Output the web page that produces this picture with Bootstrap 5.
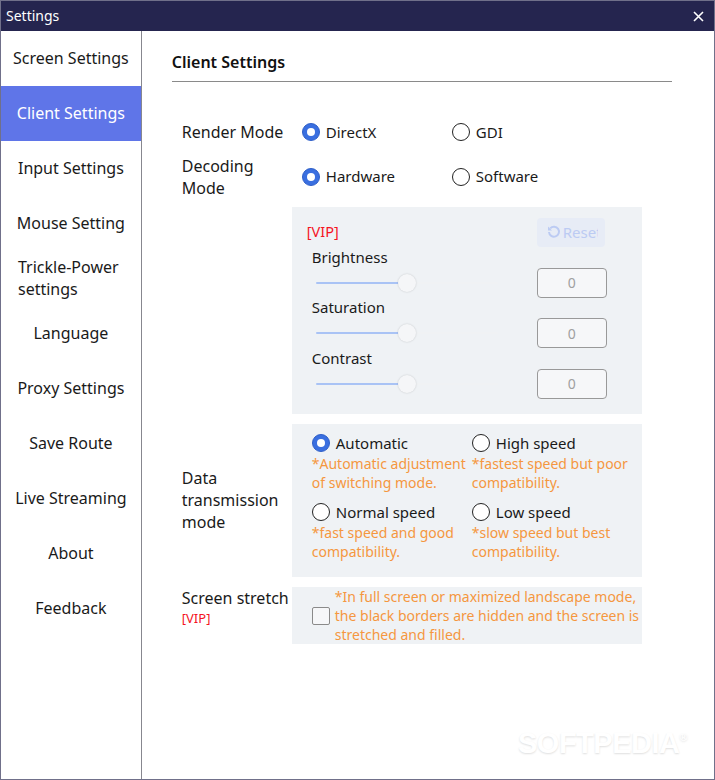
<!DOCTYPE html>
<html lang="en">
<head>
    <meta charset="UTF-8">
    <meta name="viewport" content="width=device-width, initial-scale=1.0">
    <title>Settings</title>
    <link href="https://cdn.jsdelivr.net/npm/bootstrap@5.3.3/dist/css/bootstrap.min.css" rel="stylesheet">
    <style>
        html, body { margin: 0; background: #fff; }
        body { font-family: "Noto Sans", "Noto Sans CJK SC", sans-serif; font-size: 15px; color: #1a1a1a; }
        .app-window { width: 715px; height: 780px; border: 1px solid #70708a; position: relative; overflow: hidden; }
        .title-bar { height: 30px; background: #25254f; color: #fff; font-size: 14px; padding: 0 5px 2px; }
        .close-x { width: 11px; height: 11px; margin: 2px 5px 0 0; }
        .side-menu { width: 141px; border-right: 1px solid #87878f; }
        .side-item { height: 55px; padding: 0 0 1px; color: #1a1a1a; font-size: 16px; text-decoration: none; line-height: 22px; white-space: nowrap; }
        .side-item:hover { color: #1a1a1a; }
        .side-item.current { background: #5f75e8; color: #fff; }
        .side-item.two-line { justify-content: flex-start; text-align: left; padding-left: 17px; }
        .main-pane { padding: 0 42px 0 30px; width: 573px; }
        .pane-title { height: 51px; margin: 0; font-size: 16px; font-weight: 600; line-height: 20px; padding-top: 21px; border-bottom: 1px solid #8a8a8a; color: #111; }
        .field-row { margin-left: 10px; }
        .render-row { margin-top: 39px; }
        .decode-row { margin-top: 11px; }
        .field-label { width: 110px; flex: none; font-size: 16px; line-height: 22px; white-space: nowrap; }
        .vip-tag { color: #f5141e; font-size: 13px; line-height: 18px; }
        .vip-big { font-size: 14.5px; position: relative; top: -1px; }
        .radio-pick { width: 150px; padding-left: 10px; gap: 6px; }
        .radio-pick .form-check-input, .mode-cell .form-check-input { width: 18px; height: 18px; margin: 0; flex: none; border: 1px solid #222; background-color: #fff; }
        .form-check-input:checked { background-color: #3a6fe0 !important; border-color: #2f5fc8 !important; }
        .grey-panel { width: 350px; background: #eff2f5; }
        .tune-panel { height: 207px; padding: 11px 35px 0 15px; margin-top: 8px; }
        .reset-btn { width: 68px; height: 29px; margin-right: 2px; padding: 0 0 0 10px; border: 0; border-radius: 4px; background: #e7ecf6; color: #bccbf3; font-size: 15px; gap: 2px; }
        .reset-word { display: block; width: 35px; overflow: hidden; text-align: left; }
        .tune-row { height: 50.5px; }
        .tune-name { padding-left: 5px; line-height: 20px; }
        .tune-slider { width: 182px; height: 18px; margin: 7px 0 0 9px; display: block; padding: 0; }
        .tune-slider::-webkit-slider-runnable-track { height: 2px; background: linear-gradient(to right, #a9c3f5 50%, #f0f2f4 50%); }
        .tune-slider:disabled::-webkit-slider-thumb { -webkit-appearance: none; appearance: none; width: 18px; height: 18px; margin-top: -8px; border-radius: 50%; background-color: #f5f6f8; box-shadow: 0 0 2px rgba(0,0,0,.18); }
        .tune-value, .tune-value:disabled { width: 70px; height: 30px; margin-top: 21px; padding: 0; border: 1px solid #999; border-radius: 4px; background: #f6f7f9; color: #a0a0a0; font-size: 14px; text-align: center; }
        .mode-label { padding-top: 10px; }
        .mode-panel { height: 153px; margin-top: 10px; padding: 9px 0 0 20px; }
        .mode-grid { display: grid; grid-template-columns: 160px 160px; }
        .mode-cell { height: 69px; }
        .mode-head { gap: 6px; height: 21px; }
        .hint-text { color: #f5973f; font-size: 14px; line-height: 19px; white-space: nowrap; }
        .stretch-label { padding-top: 10px; }
        .stretch-panel { height: 57px; margin-top: 10px; padding: 2px 0 0 20px; gap: 5px; overflow: hidden; }
        .stretch-panel .form-check-input { width: 18px; height: 18px; margin: 0; flex: none; border: 1px solid #8a8a8a; border-radius: 2px; background-color: #f6f7f9; }
        .stretch-panel .hint-text { margin-top: -2px; }
        .soft-mark { position: absolute; left: 517px; top: 721px; color: #fff; font-size: 29px; font-weight: 700; font-family: "Liberation Sans", sans-serif; letter-spacing: -.5px; text-shadow: 0 1px 2px rgba(0,0,0,.13); }
        .soft-mark sup { font-size: 11px; top: -1.1em; }
    </style>
</head>
<body>
    <div class="app-window d-flex flex-column">
        <div class="title-bar d-flex align-items-center justify-content-between">
            <span>Settings</span>
            <svg class="close-x" viewBox="0 0 11 11"><path d="M1 1l9 9M10 1l-9 9" stroke="#fff" stroke-width="1.6" fill="none"/></svg>
        </div>
        <div class="d-flex flex-grow-1">
            <nav class="side-menu d-flex flex-column">
                <a class="side-item d-flex align-items-center justify-content-center" href="#">Screen Settings</a>
                <a class="side-item current d-flex align-items-center justify-content-center" href="#">Client Settings</a>
                <a class="side-item d-flex align-items-center justify-content-center" href="#">Input Settings</a>
                <a class="side-item d-flex align-items-center justify-content-center" href="#">Mouse Setting</a>
                <a class="side-item two-line d-flex align-items-center" href="#">Trickle-Power<br>settings</a>
                <a class="side-item d-flex align-items-center justify-content-center" href="#">Language</a>
                <a class="side-item d-flex align-items-center justify-content-center" href="#">Proxy Settings</a>
                <a class="side-item d-flex align-items-center justify-content-center" href="#">Save Route</a>
                <a class="side-item d-flex align-items-center justify-content-center" href="#">Live Streaming</a>
                <a class="side-item d-flex align-items-center justify-content-center" href="#">About</a>
                <a class="side-item d-flex align-items-center justify-content-center" href="#">Feedback</a>
            </nav>
            <main class="main-pane">
                <h1 class="pane-title">Client Settings</h1>

                <div class="field-row render-row d-flex align-items-center">
                    <div class="field-label">Render Mode</div>
                    <label class="radio-pick d-flex align-items-center"><input class="form-check-input" type="radio" name="render" checked>DirectX</label>
                    <label class="radio-pick d-flex align-items-center"><input class="form-check-input" type="radio" name="render">GDI</label>
                </div>

                <div class="field-row decode-row d-flex align-items-center">
                    <div class="field-label">Decoding<br>Mode</div>
                    <label class="radio-pick d-flex align-items-center"><input class="form-check-input" type="radio" name="decode" checked>Hardware</label>
                    <label class="radio-pick d-flex align-items-center"><input class="form-check-input" type="radio" name="decode">Software</label>
                </div>

                <div class="field-row d-flex">
                    <div class="field-label"></div>
                    <div class="grey-panel tune-panel">
                        <div class="d-flex justify-content-between align-items-center">
                            <span class="vip-tag vip-big">[VIP]</span>
                            <button class="reset-btn d-flex align-items-center" type="button">
                                <svg width="14" height="14" viewBox="0 0 14 14" class="flex-shrink-0"><path d="M3.2 3.4A5 5 0 1 1 2 7" fill="none" stroke="#bccbf3" stroke-width="2"/><path d="M1 1.5v4h4z" fill="#bccbf3"/></svg>
                                <span class="reset-word">Reset</span>
                            </button>
                        </div>
                        <div class="tune-row d-flex justify-content-between">
                            <div><div class="tune-name">Brightness</div><input class="tune-slider form-range" type="range" min="0" max="100" value="50" disabled></div>
                            <input class="tune-value form-control" type="text" value="0" disabled>
                        </div>
                        <div class="tune-row d-flex justify-content-between">
                            <div><div class="tune-name">Saturation</div><input class="tune-slider form-range" type="range" min="0" max="100" value="50" disabled></div>
                            <input class="tune-value form-control" type="text" value="0" disabled>
                        </div>
                        <div class="tune-row d-flex justify-content-between">
                            <div><div class="tune-name">Contrast</div><input class="tune-slider form-range" type="range" min="0" max="100" value="50" disabled></div>
                            <input class="tune-value form-control" type="text" value="0" disabled>
                        </div>
                    </div>
                </div>

                <div class="field-row d-flex">
                    <div class="field-label mode-label align-self-center">Data<br>transmission<br>mode</div>
                    <div class="grey-panel mode-panel">
                        <div class="mode-grid">
                            <div class="mode-cell">
                                <label class="mode-head d-flex align-items-center"><input class="form-check-input" type="radio" name="trans" checked>Automatic</label>
                                <div class="hint-text">*Automatic adjustment<br>of switching mode.</div>
                            </div>
                            <div class="mode-cell">
                                <label class="mode-head d-flex align-items-center"><input class="form-check-input" type="radio" name="trans">High speed</label>
                                <div class="hint-text">*fastest speed but poor<br>compatibility.</div>
                            </div>
                            <div class="mode-cell">
                                <label class="mode-head d-flex align-items-center"><input class="form-check-input" type="radio" name="trans">Normal speed</label>
                                <div class="hint-text">*fast speed and good<br>compatibility.</div>
                            </div>
                            <div class="mode-cell">
                                <label class="mode-head d-flex align-items-center"><input class="form-check-input" type="radio" name="trans">Low speed</label>
                                <div class="hint-text">*slow speed but best<br>compatibility.</div>
                            </div>
                        </div>
                    </div>
                </div>

                <div class="field-row d-flex">
                    <div class="field-label stretch-label">Screen stretch<div class="vip-tag">[VIP]</div></div>
                    <div class="grey-panel stretch-panel d-flex align-items-center">
                        <input class="form-check-input" type="checkbox">
                        <div class="hint-text">*In full screen or maximized landscape mode,<br>the black borders are hidden and the screen is<br>stretched and filled.</div>
                    </div>
                </div>
            </main>
        </div>
        <div class="soft-mark">SOFTPEDIA<sup>®</sup></div>
    </div>
</body>
</html>
